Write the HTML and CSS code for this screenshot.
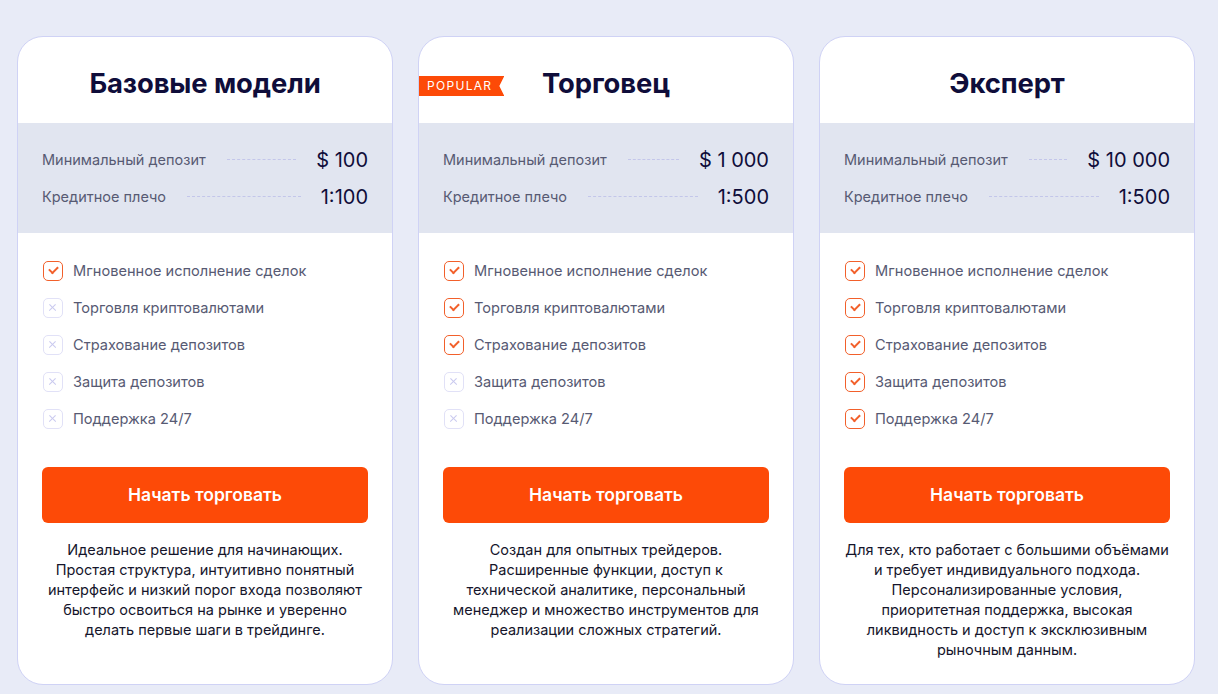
FILE: index.html
```html
<!DOCTYPE html>
<html lang="ru">
<head>
    <meta charset="UTF-8">
    <meta name="viewport" content="width=device-width, initial-scale=1.0">
    <title>Тарифы</title>
    <link rel="stylesheet" href="styles.css">
</head>
<body>
    <div class="plans">

        <div class="plan">
            <div class="plan-head">
                <h2>Базовые модели</h2>
            </div>
            <div class="plan-terms">
                <div class="term-row">
                    <span class="term-label">Минимальный депозит</span>
                    <span class="term-dots"></span>
                    <span class="term-value">$ 100</span>
                </div>
                <div class="term-row">
                    <span class="term-label">Кредитное плечо</span>
                    <span class="term-dots"></span>
                    <span class="term-value">1:100</span>
                </div>
            </div>
            <ul class="features">
                <li class="yes"><span class="mark"></span>Мгновенное исполнение сделок</li>
                <li class="no"><span class="mark"></span>Торговля криптовалютами</li>
                <li class="no"><span class="mark"></span>Страхование депозитов</li>
                <li class="no"><span class="mark"></span>Защита депозитов</li>
                <li class="no"><span class="mark"></span>Поддержка 24/7</li>
            </ul>
            <a class="btn" href="#">Начать торговать</a>
            <p class="plan-desc">Идеальное решение для начинающих. Простая структура, интуитивно понятный интерфейс и низкий порог входа позволяют быстро освоиться на рынке и уверенно делать первые шаги в трейдинге.</p>
        </div>

        <div class="plan">
            <span class="ribbon">POPULAR</span>
            <div class="plan-head">
                <h2>Торговец</h2>
            </div>
            <div class="plan-terms">
                <div class="term-row">
                    <span class="term-label">Минимальный депозит</span>
                    <span class="term-dots"></span>
                    <span class="term-value">$ 1 000</span>
                </div>
                <div class="term-row">
                    <span class="term-label">Кредитное плечо</span>
                    <span class="term-dots"></span>
                    <span class="term-value">1:500</span>
                </div>
            </div>
            <ul class="features">
                <li class="yes"><span class="mark"></span>Мгновенное исполнение сделок</li>
                <li class="yes"><span class="mark"></span>Торговля криптовалютами</li>
                <li class="yes"><span class="mark"></span>Страхование депозитов</li>
                <li class="no"><span class="mark"></span>Защита депозитов</li>
                <li class="no"><span class="mark"></span>Поддержка 24/7</li>
            </ul>
            <a class="btn" href="#">Начать торговать</a>
            <p class="plan-desc">Создан для опытных трейдеров.<br>Расширенные функции, доступ к технической аналитике, персональный менеджер и множество инструментов для реализации сложных стратегий.</p>
        </div>

        <div class="plan">
            <div class="plan-head">
                <h2>Эксперт</h2>
            </div>
            <div class="plan-terms">
                <div class="term-row">
                    <span class="term-label">Минимальный депозит</span>
                    <span class="term-dots"></span>
                    <span class="term-value">$ 10 000</span>
                </div>
                <div class="term-row">
                    <span class="term-label">Кредитное плечо</span>
                    <span class="term-dots"></span>
                    <span class="term-value">1:500</span>
                </div>
            </div>
            <ul class="features">
                <li class="yes"><span class="mark"></span>Мгновенное исполнение сделок</li>
                <li class="yes"><span class="mark"></span>Торговля криптовалютами</li>
                <li class="yes"><span class="mark"></span>Страхование депозитов</li>
                <li class="yes"><span class="mark"></span>Защита депозитов</li>
                <li class="yes"><span class="mark"></span>Поддержка 24/7</li>
            </ul>
            <a class="btn" href="#">Начать торговать</a>
            <p class="plan-desc">Для тех, кто работает с большими объёмами и требует индивидуального подхода. Персонализированные условия, приоритетная поддержка, высокая ликвидность и доступ к эксклюзивным рыночным данным.</p>
        </div>

    </div>
</body>
</html>
```

FILE: styles.css
```css
body {
    margin: 0;
    font-family: Inter, 'Noto Sans', sans-serif;
    background-color: #e8ebf7;
    color: #0f0d3a;
}
.plans {
    display: grid;
    grid-template-columns: repeat(3, 376px);
    gap: 25px;
    padding: 36px 0 10px 17px;
}
.plan {
    position: relative;
    background-color: #fff;
    border: 1px solid #cfd2f5;
    border-radius: 26px;
    overflow: hidden;
    display: flex;
    flex-direction: column;
}
.plan-head {
    height: 86px;
    display: flex;
    align-items: center;
    justify-content: center;
}
.plan-head h2 {
    margin: 6px 0 0;
    font-size: 27.4px;
    font-weight: 700;
    color: #0f0d3a;
    letter-spacing: -0.1px;
}
.ribbon {
    position: absolute;
    left: 0;
    top: 39px;
    height: 20px;
    line-height: 20px;
    padding: 0 12px 0 8px;
    background-color: #fd4a07;
    color: #fff;
    font-size: 12px;
    letter-spacing: 1.3px;
    clip-path: polygon(0 0, 100% 0, calc(100% - 5px) 50%, 100% 100%, 0 100%);
}
.plan-terms {
    background-color: #e1e5f0;
    height: 110px;
    padding: 18px 24px 0;
    box-sizing: border-box;
}
.term-row {
    display: flex;
    align-items: center;
    height: 37px;
}
.term-label {
    font-size: 14.5px;
    color: #575a73;
}
.term-dots {
    flex: 1;
    margin: 0 20px 0 21px;
    border-top: 1px dashed #c3c6ea;
}
.term-value {
    font-size: 20px;
    color: #0f0d3a;
}
.features {
    list-style: none;
    margin: 0;
    padding: 19px 24px 0 25px;
}
.features li {
    display: flex;
    align-items: center;
    height: 37px;
    font-size: 14.6px;
    color: #575a73;
}
.mark {
    width: 20px;
    height: 20px;
    box-sizing: border-box;
    border-radius: 5px;
    margin-right: 10px;
    flex-shrink: 0;
    position: relative;
}
.yes .mark {
    border: 1.5px solid #f2602b;
}
.yes .mark::after {
    content: '';
    position: absolute;
    left: 4.5px;
    top: 4px;
    width: 7px;
    height: 4px;
    border-left: 2px solid #f2602b;
    border-bottom: 2px solid #f2602b;
    transform: rotate(-45deg);
}
.no .mark {
    border: 1.5px solid #e1e1f7;
}
.no .mark::before,
.no .mark::after {
    content: '';
    position: absolute;
    left: 4px;
    top: 8px;
    width: 9px;
    height: 1.3px;
    background-color: #c9c9ef;
    transform: rotate(45deg);
}
.no .mark::after {
    transform: rotate(-45deg);
}
.btn {
    display: block;
    margin: 30px 24px 0;
    height: 56px;
    line-height: 56px;
    border-radius: 6px;
    background-color: #fd4a07;
    color: #fff;
    text-align: center;
    text-decoration: none;
    font-size: 17.5px;
    font-weight: 600;
}
.plan-desc {
    margin: 17px 24px 24px;
    font-size: 14.5px;
    line-height: 20px;
    text-align: center;
    color: #15152b;
}
```
